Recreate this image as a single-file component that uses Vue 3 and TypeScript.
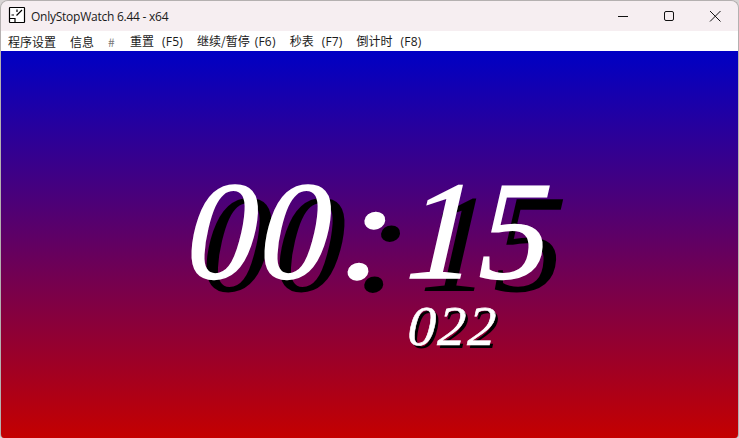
<script setup lang="ts">
interface MenuItem { label: string; key?: string; muted?: boolean; tight?: boolean }
const menu: MenuItem[] = [
  { label: '程序设置' },
  { label: '信息' },
  { label: '#', muted: true },
  { label: '重置', key: '(F5)' },
  { label: '继续/暂停', key: '(F6)', tight: true },
  { label: '秒表', key: '(F7)' },
  { label: '倒计时', key: '(F8)' },
]
</script>

<template>
  <div class="window">
    <header class="titlebar">
      <svg class="app-icon" width="18" height="18" viewBox="0 0 18 18" fill="none" stroke="#000" stroke-width="1.2">
        <rect x="1.5" y="1.5" width="15" height="15" rx="0.5" fill="#fff" />
        <path d="M1.5 12.5h5.5v4M8.5 9.5l5.5-5.5M9 3.5v2.5M3.5 9h2.5" />
      </svg>
      <span class="title">OnlyStopWatch 6.44 - x64</span>
      <div class="controls">
        <svg width="46" height="31" viewBox="0 0 46 31" fill="none" stroke="#111" stroke-width="1"><path d="M18 15.5h10" /></svg>
        <svg width="46" height="31" viewBox="0 0 46 31" fill="none" stroke="#111" stroke-width="1"><rect x="18.5" y="10.5" width="9" height="9" rx="1.5" /></svg>
        <svg width="46" height="31" viewBox="0 0 46 31" fill="none" stroke="#111" stroke-width="1"><path d="M18 10l10.5 10.5M28.5 10L18 20.5" /></svg>
      </div>
    </header>
    <nav class="menu">
      <span v-for="item in menu" :key="item.label" class="menu-item" :class="{ muted: item.muted, tight: item.tight }">
        {{ item.label }}<span v-if="item.key" class="key">{{ item.key }}</span>
      </span>
    </nav>
    <main class="clock">
      <div class="time">00<span class="colon">:</span>15</div>
      <div class="millis">022</div>
    </main>
  </div>
</template>

<style>
html, body { margin: 0; background: #d8d4d4; }
</style>

<style scoped>
.window {
  width: 739px;
  height: 438px;
  box-sizing: border-box;
  display: flex;
  flex-direction: column;
  border: 1px solid #b4b0b0;
  border-bottom: 0;
  border-radius: 8px 8px 4px 4px;
  overflow: hidden;
  font-family: "Noto Sans CJK SC", "Liberation Sans", sans-serif;
  color: #1a1a1a;
}
.titlebar {
  height: 30px;
  flex: none;
  display: flex;
  align-items: center;
  padding-left: 7px;
  background: #f6eef1;
}
.app-icon { flex: none; margin-top: -2px; }
.title {
  margin-left: 5px;
  font-family: "Open Sans", "Liberation Sans", sans-serif;
  font-size: 12px;
  letter-spacing: -0.25px;
}
.controls { margin-left: auto; display: flex; }
.menu {
  height: 20px;
  flex: none;
  display: flex;
  align-items: center;
  gap: 14px;
  padding-left: 7px;
  background: #fff;
  font-size: 12px;
  white-space: nowrap;
}
.menu-item.muted { color: #777; min-width: 8px; }
.key {
  margin-left: 8px;
  font-family: "Open Sans", sans-serif;
  letter-spacing: 0.2px;
}
.tight .key { margin-left: 5px; }
.clock {
  flex: 1;
  display: flex;
  flex-direction: column;
  align-items: center;
  background: linear-gradient(#0000c4, #c40000);
  color: #fff;
  font-family: "Liberation Serif", serif;
  font-style: italic;
}
.time {
  margin-top: 105px;
  margin-left: 2px;
  font-size: 140px;
  line-height: 150px;
  letter-spacing: 3px;
  -webkit-text-stroke: 1.5px #fff;
  text-shadow: 15px 13px 0 #000;
  transform: skewX(-3deg);
}
.colon {
  display: inline-block;
  margin: 0 12px;
  transform: scaleX(1.15) skewX(-3deg);
}
.millis {
  margin-left: 166px;
  margin-top: -11px;
  font-size: 56px;
  line-height: 62px;
  letter-spacing: 2px;
  -webkit-text-stroke: 0.6px #fff;
  text-shadow: 3px 3px 0 #000;
  transform: skewX(-3deg);
}
</style>
